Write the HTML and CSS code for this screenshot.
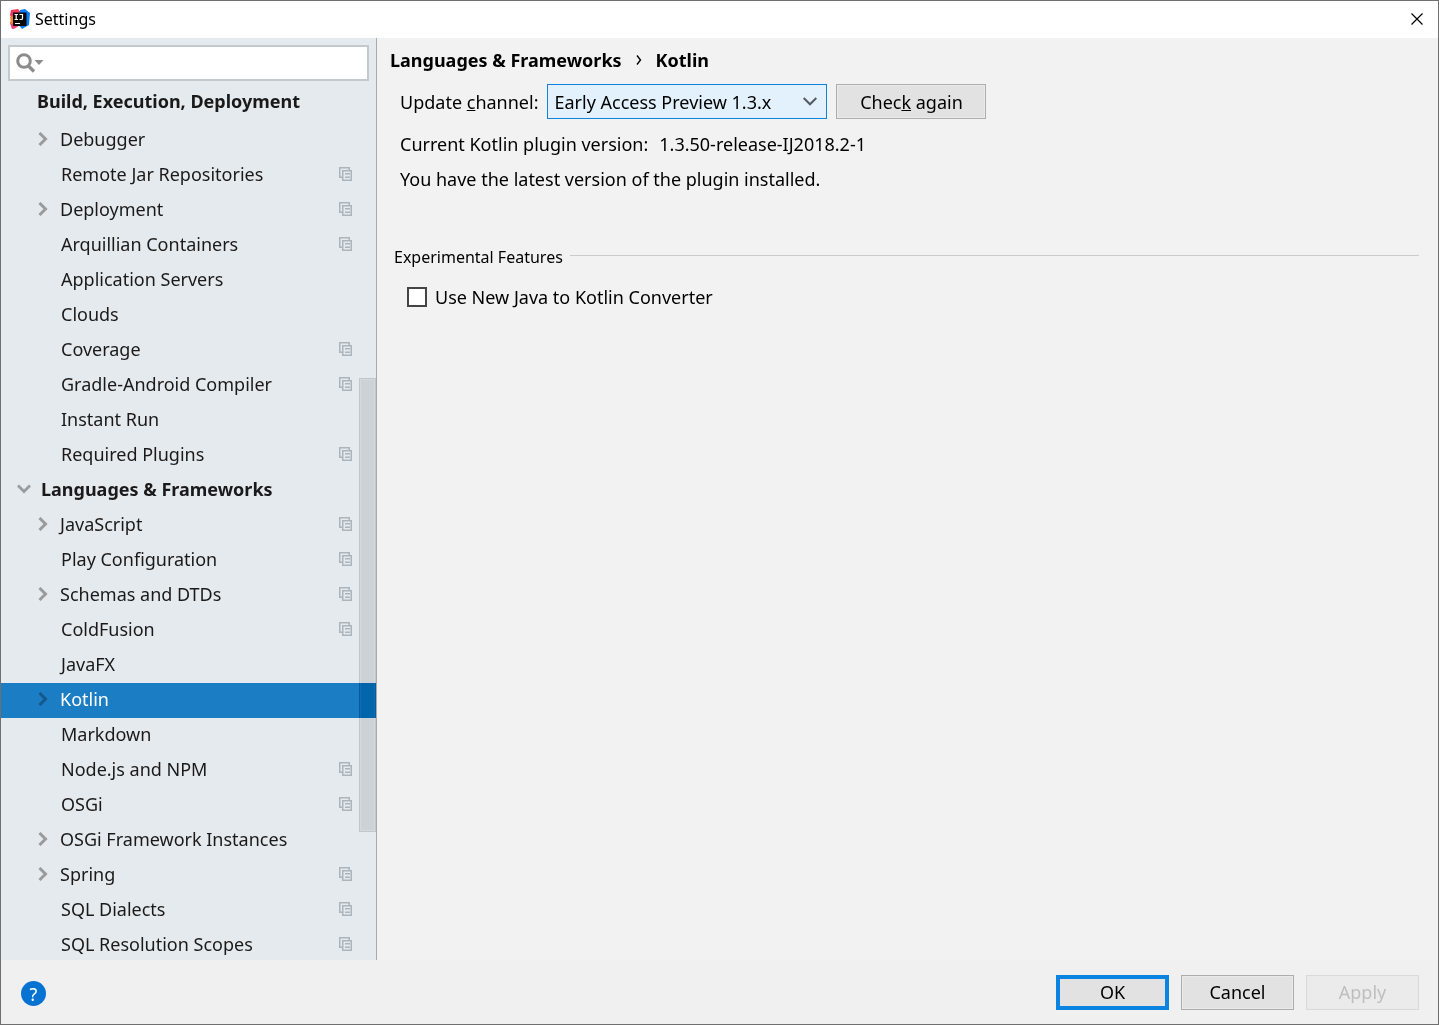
FILE: index.html
```html
<!DOCTYPE html>
<html lang="en">
<head>
<meta charset="utf-8">
<title>Settings</title>
<link rel="stylesheet" href="styles.css">
</head>
<body>
<svg class="defs" aria-hidden="true">
  <symbol id="right" viewBox="0 0 10 14"><path d="M1.5 1 7.500 7 1.5 13" fill="none" stroke="currentColor" stroke-width="3"/></symbol>
  <symbol id="down" viewBox="0 0 14 10"><path d="M1 1.5 7 7.500 13 1.500" fill="none" stroke="currentColor" stroke-width="2.800"/></symbol>
  <symbol id="copy" viewBox="0 0 13 14"><path d="M0 0h11v3H9.500V1.500h-8v8H3V11H0z" fill="currentColor"/><path fill-rule="evenodd" d="M3 3h10v11H3zM4.500 4.500v8h7v-8zM6 6h5v1.500H6zM6 9.500h5V11H6z" fill="currentColor"/></symbol>
</svg>
<div class="window">
  <header class="titlebar">
    <svg class="logo" viewBox="0 0 20 20" aria-hidden="true">
      <path d="M1 1 8 0 12 5 8 15 6 19 2 20 0 14 2 10 0 6z" fill="#f2395b"/>
      <path d="M0 8 4 7 5 14 1 15z" fill="#f9872f"/>
      <path d="M10 1 15 0 20 4 19 16 12 20 8 15z" fill="#087cfa"/>
      <path d="M2 16 6 15 9 17 3 20z" fill="#e8448c"/>
      <path d="M3 3.500h13.500V17H3z" fill="#0a0a0a"/>
      <path d="M4.500 5.500h3.500M6.200 5.500v5M4.500 10.500h3.500M9.500 5.500h3v3.700q0 1.300-1.300 1.300H9.500M5 14.500h5" fill="none" stroke="#fff" stroke-width="1.200"/>
    </svg>
    <h1 class="title">Settings</h1>
    <button class="close" type="button" aria-label="Close"><svg viewBox="0 0 12 12"><path d="M.5.5l11 11M11.500.5l-11 11" stroke="#000" stroke-width="1.200"/></svg></button>
  </header>
  <div class="body">
    <nav class="sidebar" aria-label="Settings sections">
      <label class="search">
        <svg viewBox="0 0 28 20" aria-hidden="true"><circle cx="8" cy="8" r="6.300" fill="none" stroke="#8c8c8c" stroke-width="3"/><path d="M12 12.500 18 18.500" stroke="#8c8c8c" stroke-width="3.400"/><path d="M18.500 7h9L23 12z" fill="#8c8c8c"/></svg>
        <input type="text" aria-label="Search settings">
      </label>
      <h2 class="group">Build, Execution, Deployment</h2>
      <ul class="tree">
        <li><a href="#" class="row"><svg class="arrow"><use href="#right"/></svg><span>Debugger</span></a></li>
        <li><a href="#" class="row leaf"><span>Remote Jar Repositories</span><svg class="copy"><use href="#copy"/></svg></a></li>
        <li><a href="#" class="row"><svg class="arrow"><use href="#right"/></svg><span>Deployment</span><svg class="copy"><use href="#copy"/></svg></a></li>
        <li><a href="#" class="row leaf"><span>Arquillian Containers</span><svg class="copy"><use href="#copy"/></svg></a></li>
        <li><a href="#" class="row leaf"><span>Application Servers</span></a></li>
        <li><a href="#" class="row leaf"><span>Clouds</span></a></li>
        <li><a href="#" class="row leaf"><span>Coverage</span><svg class="copy"><use href="#copy"/></svg></a></li>
        <li><a href="#" class="row leaf"><span>Gradle-Android Compiler</span><svg class="copy"><use href="#copy"/></svg></a></li>
        <li><a href="#" class="row leaf"><span>Instant Run</span></a></li>
        <li><a href="#" class="row leaf"><span>Required Plugins</span><svg class="copy"><use href="#copy"/></svg></a></li>
        <li><a href="#" class="row parent"><svg class="arrow-down"><use href="#down"/></svg><span>Languages &amp; Frameworks</span></a></li>
        <li><a href="#" class="row"><svg class="arrow"><use href="#right"/></svg><span>JavaScript</span><svg class="copy"><use href="#copy"/></svg></a></li>
        <li><a href="#" class="row leaf"><span>Play Configuration</span><svg class="copy"><use href="#copy"/></svg></a></li>
        <li><a href="#" class="row"><svg class="arrow"><use href="#right"/></svg><span>Schemas and DTDs</span><svg class="copy"><use href="#copy"/></svg></a></li>
        <li><a href="#" class="row leaf"><span>ColdFusion</span><svg class="copy"><use href="#copy"/></svg></a></li>
        <li><a href="#" class="row leaf"><span>JavaFX</span></a></li>
        <li><a href="#" class="row selected" aria-current="page"><svg class="arrow"><use href="#right"/></svg><span>Kotlin</span></a></li>
        <li><a href="#" class="row leaf"><span>Markdown</span></a></li>
        <li><a href="#" class="row leaf"><span>Node.js and NPM</span><svg class="copy"><use href="#copy"/></svg></a></li>
        <li><a href="#" class="row leaf"><span>OSGi</span><svg class="copy"><use href="#copy"/></svg></a></li>
        <li><a href="#" class="row"><svg class="arrow"><use href="#right"/></svg><span>OSGi Framework Instances</span></a></li>
        <li><a href="#" class="row"><svg class="arrow"><use href="#right"/></svg><span>Spring</span><svg class="copy"><use href="#copy"/></svg></a></li>
        <li><a href="#" class="row leaf"><span>SQL Dialects</span><svg class="copy"><use href="#copy"/></svg></a></li>
        <li><a href="#" class="row leaf"><span>SQL Resolution Scopes</span><svg class="copy"><use href="#copy"/></svg></a></li>
      </ul>
      <div class="thumb"></div>
    </nav>
    <main class="content">
      <h2 class="crumbs"><span>Languages &amp; Frameworks</span><svg viewBox="0 0 6 10" aria-hidden="true"><path d="M1 .5 4.500 5 1 9.500" fill="none" stroke="#000" stroke-width="1.400"/></svg><span>Kotlin</span></h2>
      <div class="channel">
        <label for="channel">Update <u>c</u>hannel:</label>
        <div class="combo">
          <select id="channel"><option>Early Access Preview 1.3.x</option></select>
          <svg viewBox="0 0 14 9" aria-hidden="true"><path d="M.7 1 7 7.300 13.300 1" fill="none" stroke="#555b60" stroke-width="2"/></svg>
        </div>
        <button class="btn check" type="button">Chec<u>k</u> again</button>
      </div>
      <p class="line version"><span>Current Kotlin plugin version:</span><span>1.3.50-release-IJ2018.2-1</span></p>
      <p class="line">You have the latest version of the plugin installed.</p>
      <section class="features">
        <h3 class="section-title">Experimental Features</h3>
        <label class="option"><input type="checkbox">Use New Java to Kotlin Converter</label>
      </section>
    </main>
  </div>
  <footer class="footer">
    <button class="help" type="button" aria-label="Help">?</button>
    <button class="btn primary" type="button">OK</button>
    <button class="btn" type="button">Cancel</button>
    <button class="btn" type="button" disabled>Apply</button>
  </footer>
</div>
</body>
</html>
```
FILE: styles.css
```css
* { box-sizing: border-box; }
body { margin: 0; font: 18px/24px "Noto Sans", "Open Sans", sans-serif; color: #000; }
h1, h2, h3, p, ul { margin: 0; padding: 0; }
button, input, select { font: inherit; color: inherit; }
svg { flex: none; display: block; }
.defs { position: absolute; width: 0; height: 0; }
.window { display: flex; flex-direction: column; height: 100vh; border: 1px solid #6f6f6f; background: #f2f2f2; overflow: hidden; }

.titlebar { display: flex; align-items: center; gap: 5px; height: 37px; padding: 0 15px 2px 9px; background: #fff; flex: none; }
.logo { width: 20px; height: 20px; }
.title { font-size: 16px; font-weight: 400; }
.close { margin-left: auto; padding: 0; border: 0; background: none; }
.close svg { width: 12px; height: 12px; }

.body { display: flex; flex: 1; min-height: 0; }
.sidebar { position: relative; width: 376px; flex: none; background: #e5eaee; border-right: 1px solid #ababab; overflow: hidden; color: #1a1a1a; }
.search { display: flex; align-items: center; height: 36px; margin: 7px 7px 0; padding-left: 6px; border: 2px solid #c4c9cd; background: #fff; }
.search svg { width: 28px; height: 20px; }
.search input { flex: 1; min-width: 0; border: 0; outline: 0; background: none; }
.group { padding: 8px 0 10px 36px; font-size: 18px; line-height: 24px; }
.tree { list-style: none; }
.row { display: flex; align-items: center; height: 35px; padding: 0 24px 3px 37px; color: inherit; text-decoration: none; white-space: nowrap; }
.row.leaf { padding-left: 60px; }
.row.parent { padding-left: 16px; font-weight: 700; }
.arrow { width: 10px; height: 14px; margin-right: 12px; color: #999c9e; }
.arrow-down { width: 14px; height: 10px; margin-right: 10px; color: #999c9e; }
.copy { width: 13px; height: 14px; margin-left: auto; color: #adb5bb; }
.selected { background: #1b7dc4; color: #fff; }
.selected .arrow { color: #14588a; }
.thumb { position: absolute; top: 340px; right: 0; width: 17px; height: 454px; border: 1px solid #242424; background: #181818; box-shadow: inset 0 0 0 1px #101010; mix-blend-mode: difference; }

.content { flex: 1; min-width: 0; padding: 10px 19px 0 13px; }
.crumbs { display: flex; align-items: center; gap: 14px; font-size: 18px; line-height: 24px; }
.crumbs svg { width: 6px; height: 10px; }
.channel { display: flex; align-items: center; margin: 12px 0 0 10px; }
.combo { position: relative; width: 280px; margin: 0 9px; }
.combo select { display: block; appearance: none; width: 100%; height: 35px; padding: 0 30px 0 6px; border: 1px solid #0e83dc; border-radius: 0; outline: 0; background: #e2f1fb; }
.combo svg { position: absolute; right: 10px; top: 13px; width: 14px; height: 9px; pointer-events: none; }
.btn { width: 113px; height: 35px; padding: 0; border: 1px solid #adadad; background: #e2e2e2; box-shadow: inset 0 0 0 1px #eaeaea; }
.check { width: 150px; }
.primary { border: 4px solid #0a84e0; box-shadow: none; }
.btn:disabled { border-color: #d9d9d9; background: #ebebeb; color: #bebebe; }
.line { margin: 11px 0 0 10px; }
.version { display: flex; gap: 11px; margin-top: 13px; }
.features { margin-top: 54px; }
.section-title { display: flex; align-items: center; gap: 7px; margin-left: 4px; font-size: 16px; font-weight: 400; }
.section-title::after { content: ""; flex: 1; height: 1px; margin-bottom: 3px; background: #cacccb; }
.option { display: flex; align-items: center; gap: 8px; margin: 16px 0 0 17px; }
.option input { appearance: none; width: 20px; height: 20px; margin: 0; border: 2px solid #444; background: #fff; }

.footer { display: flex; align-items: center; gap: 12px; height: 64px; padding: 0 19px 0 20px; background: #f0f0f0; flex: none; }
.help { width: 25px; height: 25px; margin: 3px auto 0 0; padding: 0; border: 0; border-radius: 50%; background: #0673d3; color: #fff; }
```
